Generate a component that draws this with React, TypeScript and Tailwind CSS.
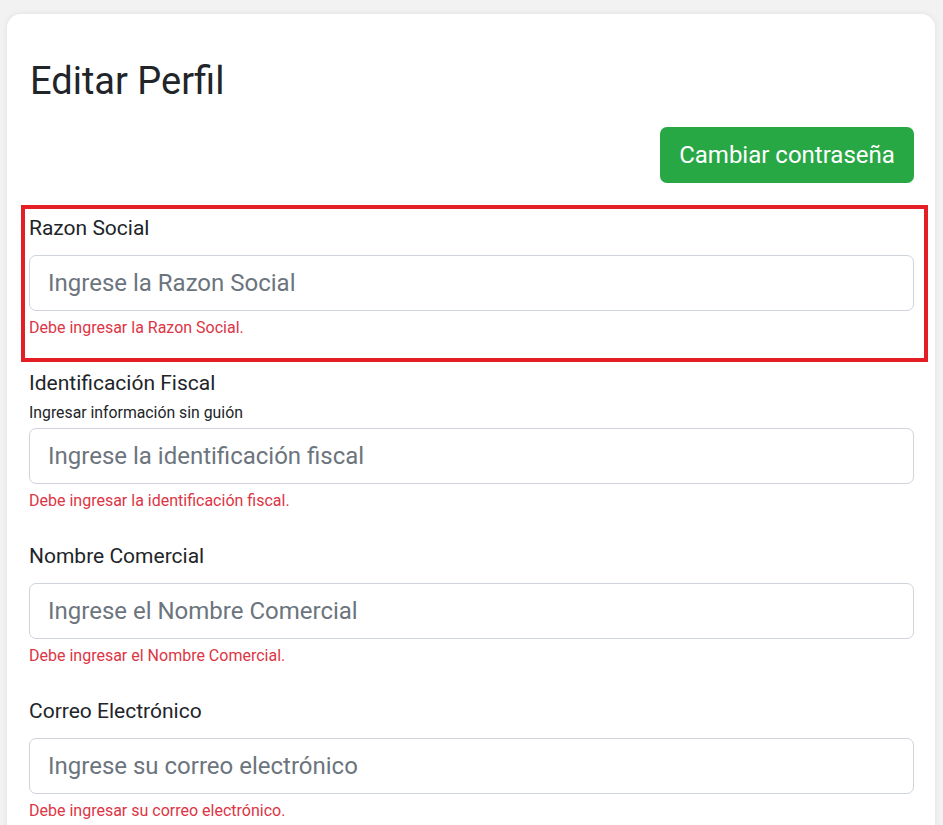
import React from "react";

function Field({
  label,
  help,
  placeholder,
  error,
  className = "",
  children,
}: {
  label: string;
  help?: string;
  placeholder: string;
  error: string;
  className?: string;
  children?: React.ReactNode;
}) {
  return (
    <div className={"relative " + className}>
      {children}
      <label className="block text-[21px] leading-[30px] text-[#212529]">{label}</label>
      {help ? (
        <div className="mt-[4px] text-[15.8px] leading-[21px] text-[#212529]">{help}</div>
      ) : null}
      <input
        type="text"
        placeholder={placeholder}
        className={
          "block w-full h-[56px] rounded-[7px] border border-[#ced4da] bg-white px-[18px] text-[24px] text-[#212529] placeholder:text-[#6c757d] outline-none " +
          (help ? "mt-[5px]" : "mt-[12px]")
        }
      />
      <div className="mt-[5px] text-[16px] leading-[24px] text-[#dc3545]">{error}</div>
    </div>
  );
}

export default function App() {
  return (
    <div
      className="h-[825px] overflow-hidden bg-[#f2f2f2] pt-[14px] pl-[7px] pr-[8px]"
      style={{ fontFamily: "Roboto, 'Liberation Sans', sans-serif" }}
    >
      <div className="min-h-[830px] rounded-t-[14px] bg-white pl-[22px] pr-[21px] pt-[44px] pb-[40px] shadow-[0_0_6px_rgba(0,0,0,0.08)]">
        <h1 className="text-[38px] leading-[46px] font-normal text-[#212529] pl-[1px]">Editar Perfil</h1>
        <div className="mt-[23px] flex justify-end">
          <button className="h-[56px] w-[254px] rounded-[7px] bg-[#28a745] text-[24px] text-white">
            Cambiar contraseña
          </button>
        </div>
        <Field
          className="mt-[30px]"
          label="Razon Social"
          placeholder="Ingrese la Razon Social"
          error="Debe ingresar la Razon Social."
        >
          <div className="pointer-events-none absolute -left-[8px] -right-[14px] -top-[8px] -bottom-[22px] border-[4px] border-[#e31e24]" />
        </Field>
        <Field
          className="mt-[28px]"
          label="Identificación Fiscal"
          help="Ingresar información sin guión"
          placeholder="Ingrese la identificación fiscal"
          error="Debe ingresar la identificación fiscal."
        />
        <Field
          className="mt-[28px]"
          label="Nombre Comercial"
          placeholder="Ingrese el Nombre Comercial"
          error="Debe ingresar el Nombre Comercial."
        />
        <Field
          className="mt-[28px]"
          label="Correo Electrónico"
          placeholder="Ingrese su correo electrónico"
          error="Debe ingresar su correo electrónico."
        />
      </div>
    </div>
  );
}
